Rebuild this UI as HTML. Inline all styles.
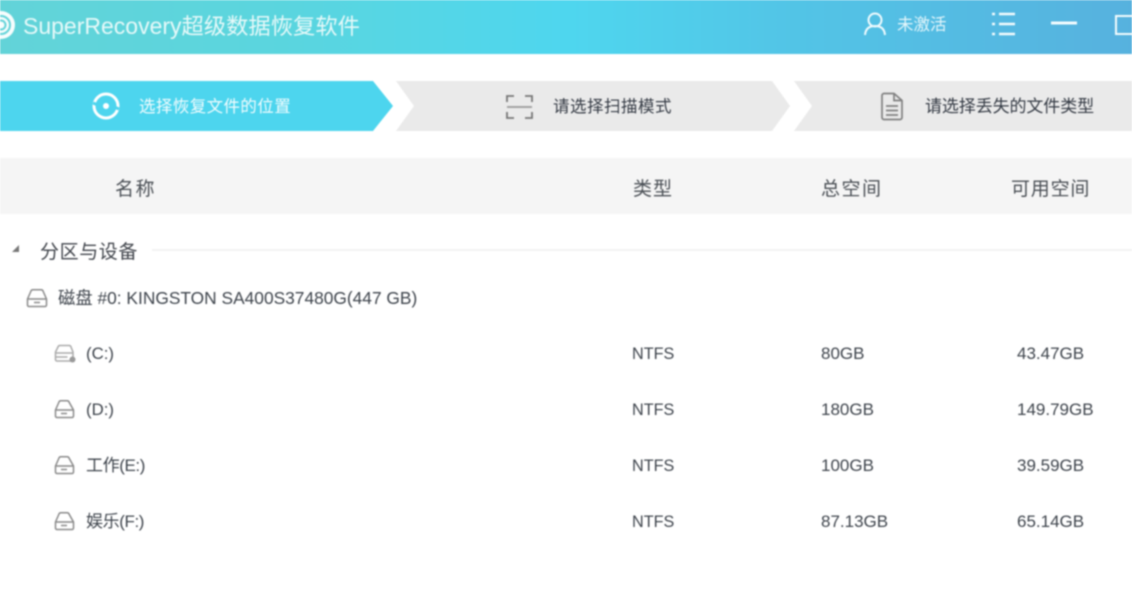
<!DOCTYPE html>
<html lang="zh">
<head>
<meta charset="utf-8">
<title>SuperRecovery</title>
<style>
html,body{margin:0;padding:0;width:1132px;height:603px;overflow:hidden;background:#fff}
body{position:relative;font-family:"Liberation Sans","Noto Sans CJK SC",sans-serif;color:#444}
#wrap{position:absolute;left:0;top:0;width:1132px;height:603px;filter:blur(.85px);overflow:hidden}
.t{position:absolute;white-space:nowrap;line-height:20px}
.hdr{position:absolute;left:0;top:0;width:1132px;height:54px;background:linear-gradient(90deg,#62d3d8 0,#5ad5de 25%,#4ed6ee 50%,#52c4e6 70%,#56b1de 100%)}
svg{position:absolute;overflow:visible}
.r{font-size:17px;color:#3e444c}
.h{font-size:19px;color:#4a4f55;top:180px}
</style>
</head>
<body>
<div id="wrap">
<div class="hdr"></div>

<svg style="left:-12px;top:8px" width="30" height="34" viewBox="0 0 30 34" fill="none">
<circle cx="13" cy="17" r="14" fill="#fff" opacity=".95"/>
<circle cx="13" cy="17" r="9" stroke="#62d3d8" stroke-width="2"/>
<circle cx="13" cy="17" r="4.500" stroke="#62d3d8" stroke-width="2"/>
</svg>
<div class="t" style="left:23px;top:14px;font-size:23px;color:#e6f9f9;line-height:24px">SuperRecovery<span style="font-size:22.300px">超级数据恢复软件</span></div>

<svg style="left:862px;top:10px" width="26" height="28" viewBox="0 0 26 28" fill="none" stroke="#f0fbfe" stroke-width="2">
<circle cx="13" cy="10" r="6.500"/>
<path d="M3 25c.5-6 4-9 10-9s9.500 3 10 9"/>
</svg>
<div class="t" style="left:897px;top:15px;font-size:16.500px;color:#e4f6fb">未激活</div>

<svg style="left:958px;top:10px" width="174" height="30" viewBox="0 0 174 30" fill="none" stroke="#f4fcfe" stroke-width="2.500">
<path d="M34 4h3M41 4h16M34 14h3M41 14h16M34 24h3M41 24h16"/>
<path d="M93 13h26" stroke-width="3"/>
<rect x="158" y="6" width="20" height="18" stroke-width="2"/>
</svg>

<svg style="left:0;top:81px" width="1132" height="50" viewBox="0 0 1132 50">
<polygon points="0,0 373,0 393,25 373,50 0,50" fill="#4dd5ee"/>
<polygon points="396,0 772,0 790,25 772,50 396,50 414,25" fill="#eaeaea"/>
<polygon points="794,0 1132,0 1132,50 794,50 812,25" fill="#eaeaea"/>
</svg>

<svg style="left:90px;top:91px" width="32" height="32" viewBox="0 0 32 32" fill="none">
<circle cx="16" cy="15" r="12" stroke="#fff" stroke-width="3"/>
<circle cx="16" cy="15" r="3" fill="#fff"/>
<path d="M3 12l7 3M29 18l-7-3" stroke="#4dd5ee" stroke-width="3"/>
</svg>
<div class="t" style="left:139px;top:97px;font-size:16.500px;color:#f2fcfe;letter-spacing:.4px">选择恢复文件的位置</div>

<svg style="left:506px;top:94px" width="28" height="26" viewBox="0 0 28 26" fill="none" stroke="#777" stroke-width="1.800">
<path d="M1 8V2h7M19 2h7v6M1 18v6h7M19 24h7v-6"/>
<path d="M1 13h25" stroke="#999"/>
</svg>
<div class="t" style="left:553px;top:97px;font-size:16.500px;color:#343a44;letter-spacing:.5px">请选择扫描模式</div>

<svg style="left:880px;top:92px" width="24" height="30" viewBox="0 0 24 30" fill="none" stroke="#808080" stroke-width="1.700">
<path d="M2 3.500a2 2 0 0 1 2-2h10l8 7v17a2 2 0 0 1-2 2H4a2 2 0 0 1-2-2z"/>
<path d="M14 1.500v7h8M6 14h12M6 18.500h12M6 23h12"/>
</svg>
<div class="t" style="left:925px;top:97px;font-size:17px;color:#343a44;letter-spacing:-.1px">请选择丢失的文件类型</div>

<div style="position:absolute;left:0;top:158px;width:1132px;height:56px;background:#f5f5f5"></div>
<div class="t h" style="left:115px;letter-spacing:1.500px">名称</div>
<div class="t h" style="left:633px;letter-spacing:1px">类型</div>
<div class="t h" style="left:821px;letter-spacing:1.500px">总空间</div>
<div class="t h" style="left:1011px;letter-spacing:.8px">可用空间</div>

<svg style="left:10px;top:244px" width="12" height="12" viewBox="0 0 12 12"><polygon points="9,1 9,8 2,8" fill="#777"/></svg>
<div class="t" style="left:40px;top:243px;font-size:19px;color:#40444b;letter-spacing:.6px">分区与设备</div>
<div style="position:absolute;left:152px;top:249px;width:980px;height:2px;background:#f3f3f3"></div>

<svg style="left:26px;top:288px" width="22" height="20" viewBox="0 0 22 20" fill="none" stroke="#8a8a8a" stroke-width="1.500">
<path d="M1.500 11L5 3a2 2 0 0 1 2-1.200h8A2 2 0 0 1 17 3l3.500 8v6a1.500 1.500 0 0 1-1.500 1.500H3A1.500 1.500 0 0 1 1.500 17zM1.500 11h19M8 14.500h6"/>
</svg>
<div class="t r" style="left:58px;top:288px;font-size:17.350px">磁盘 #0: KINGSTON SA400S37480G(447 GB)</div>

<svg style="left:54px;top:344px" width="24" height="20" viewBox="0 0 24 20" fill="none" stroke="#aaa" stroke-width="1.500">
<path d="M1.500 8L4 3a2 2 0 0 1 2-1.500h9A2 2 0 0 1 17 3l2 5v9H3a1.500 1.500 0 0 1-1.500-1.500zM1.500 9h17M1.500 13h12"/>
<circle cx="18.500" cy="15.500" r="3" fill="#999" stroke="none"/>
</svg>
<svg style="left:54px;top:399px" width="22" height="20" viewBox="0 0 22 20" fill="none" stroke="#8a8a8a" stroke-width="1.500">
<path d="M1.500 11L5 3a2 2 0 0 1 2-1.200h6A2 2 0 0 1 15 3l4.500 8v6a1.500 1.500 0 0 1-1.500 1.500H3A1.500 1.500 0 0 1 1.500 17zM1.500 11h18M7 14.500h6"/>
</svg>
<svg style="left:54px;top:455px" width="22" height="20" viewBox="0 0 22 20" fill="none" stroke="#8a8a8a" stroke-width="1.500">
<path d="M1.500 11L5 3a2 2 0 0 1 2-1.200h6A2 2 0 0 1 15 3l4.500 8v6a1.500 1.500 0 0 1-1.500 1.500H3A1.500 1.500 0 0 1 1.500 17zM1.500 11h18M7 14.500h6"/>
</svg>
<svg style="left:54px;top:511px" width="22" height="20" viewBox="0 0 22 20" fill="none" stroke="#8a8a8a" stroke-width="1.500">
<path d="M1.500 11L5 3a2 2 0 0 1 2-1.200h6A2 2 0 0 1 15 3l4.500 8v6a1.500 1.500 0 0 1-1.500 1.500H3A1.500 1.500 0 0 1 1.500 17zM1.500 11h18M7 14.500h6"/>
</svg>

<div class="t r" style="left:86px;top:344px;font-size:16.800px">(C:)</div>
<div class="t r" style="left:86px;top:400px;font-size:16.800px">(D:)</div>
<div class="t r" style="left:86px;top:456px;font-size:17px;letter-spacing:-.4px">工作(E:)</div>
<div class="t r" style="left:86px;top:512px;font-size:17px;letter-spacing:-.4px">娱乐(F:)</div>

<div class="t r" style="left:632px;top:344px;font-size:16.200px">NTFS</div>
<div class="t r" style="left:632px;top:400px;font-size:16.200px">NTFS</div>
<div class="t r" style="left:632px;top:456px;font-size:16.200px">NTFS</div>
<div class="t r" style="left:632px;top:512px;font-size:16.200px">NTFS</div>

<div class="t r" style="left:821px;top:344px">80GB</div>
<div class="t r" style="left:821px;top:400px">180GB</div>
<div class="t r" style="left:821px;top:456px">100GB</div>
<div class="t r" style="left:821px;top:512px">87.13GB</div>

<div class="t r" style="left:1017px;top:344px">43.47GB</div>
<div class="t r" style="left:1017px;top:400px">149.79GB</div>
<div class="t r" style="left:1017px;top:456px">39.59GB</div>
<div class="t r" style="left:1017px;top:512px">65.14GB</div>
</div>
</body>
</html>
